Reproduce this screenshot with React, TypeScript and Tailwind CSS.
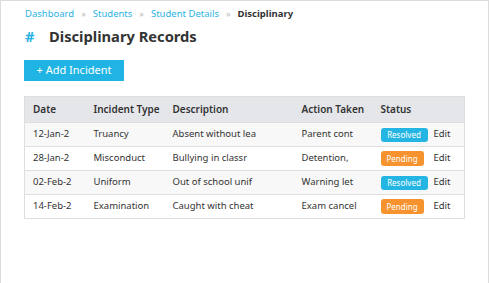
import React from 'react';

const rows = [
  { date: '12-Jan-2', type: 'Truancy', desc: 'Absent without lea', action: 'Parent cont', status: 'Resolved' },
  { date: '28-Jan-2', type: 'Misconduct', desc: 'Bullying in classr', action: 'Detention,', status: 'Pending' },
  { date: '02-Feb-2', type: 'Uniform', desc: 'Out of school unif', action: 'Warning let', status: 'Resolved' },
  { date: '14-Feb-2', type: 'Examination', desc: 'Caught with cheat', action: 'Exam cancel', status: 'Pending' },
];

export default function App() {
  return (
    <div
      className="w-[489px] h-[283px] bg-white border border-[#dcdcdc] border-b-0 text-[#333]"
      style={{ fontFamily: '"Noto Sans", "Open Sans", sans-serif' }}
    >
      <div className="pl-[23px] pr-[23px] pt-[5px]">
        {/* Breadcrumb */}
        <div className="flex items-center gap-[7px] text-[9.5px] leading-[15px] pl-[1px]">
          <span className="text-[#2bb2e2]">Dashboard</span>
          <span className="text-[#bbb] text-[9px]">»</span>
          <span className="text-[#2bb2e2]">Students</span>
          <span className="text-[#bbb] text-[9px]">»</span>
          <span className="text-[#2bb2e2]">Student Details</span>
          <span className="text-[#bbb] text-[9px]">»</span>
          <span className="font-bold text-[#333]">Disciplinary</span>
        </div>

        {/* Title */}
        <h1 className="mt-[4px] pl-[1px] flex items-center text-[14.7px] leading-[22px] font-bold">
          <span className="text-[#2bb2e2] w-[24px]">#</span>
          <span className="text-[#333]">Disciplinary Records</span>
        </h1>

        <button className="mt-[13px] w-[100px] h-[21px] bg-[#20b4e4] text-white text-[11px] flex items-center justify-center">
          + Add Incident
        </button>

        {/* Table */}
        <table className="mt-[15px] w-[440px] table-fixed border-collapse border border-[#dedede] text-[9.5px]">
          <colgroup>
            <col className="w-[61px]" />
            <col className="w-[79px]" />
            <col className="w-[129px]" />
            <col className="w-[79px]" />
            <col className="w-[92px]" />
          </colgroup>
          <thead>
            <tr className="bg-[#e4e6ea] h-[26px] text-left text-[10px]">
              <th className="pl-[8px] font-semibold">Date</th>
              <th className="pl-[8px] font-semibold">Incident Type</th>
              <th className="pl-[8px] font-semibold">Description</th>
              <th className="pl-[8px] font-semibold">Action Taken</th>
              <th className="pl-[8px] font-semibold">Status</th>
            </tr>
          </thead>
          <tbody>
            {rows.map((r, i) => (
              <tr key={i} className={`h-[24px] border-t border-[#dedede] ${i % 2 === 0 ? 'bg-[#f8f8f8]' : 'bg-white'}`}>
                <td className="pl-[8px] whitespace-nowrap overflow-hidden">{r.date}</td>
                <td className="pl-[8px] whitespace-nowrap overflow-hidden">{r.type}</td>
                <td className="pl-[8px] whitespace-nowrap overflow-hidden">{r.desc}</td>
                <td className="pl-[8px] whitespace-nowrap overflow-hidden">{r.action}</td>
                <td className="pl-[8px] whitespace-nowrap">
                  <div className="flex items-center">
                    <div className="w-[53px] flex">
                      {r.status === 'Resolved' ? (
                        <span className="inline-flex items-center justify-center w-[47px] h-[14px] rounded-[3px] bg-[#25b5e3] text-white text-[8px]">Resolved</span>
                      ) : (
                        <span className="inline-flex items-center justify-center w-[43px] h-[15px] rounded-[3px] bg-[#f7932f] text-white text-[8px]">Pending</span>
                      )}
                    </div>
                    <span>Edit</span>
                  </div>
                </td>
              </tr>
            ))}
          </tbody>
        </table>
      </div>
    </div>
  );
}
